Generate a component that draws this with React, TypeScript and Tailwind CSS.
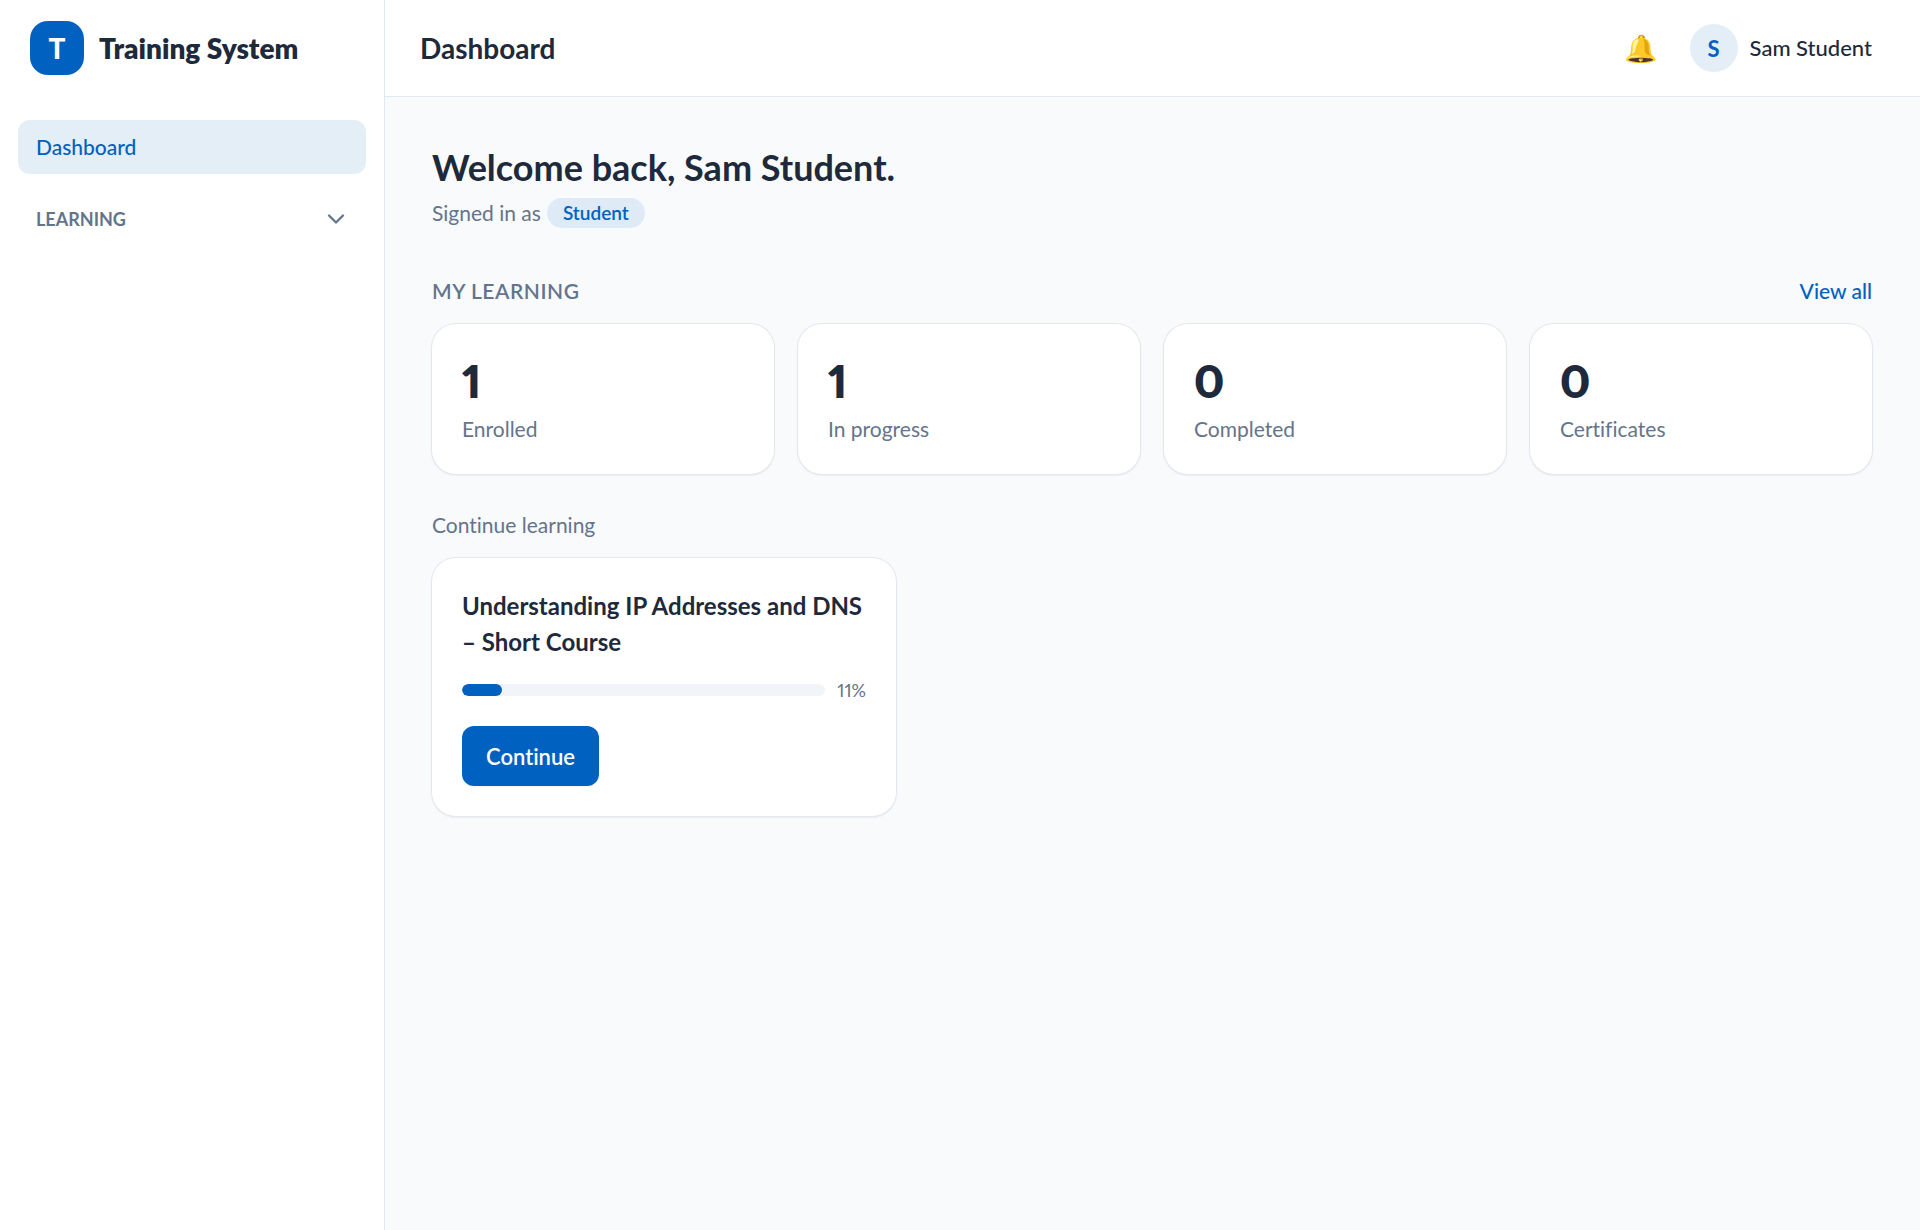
import { useState } from "react";
import { ChevronDown } from "lucide-react";

const stats = [
  { label: "Enrolled", value: 1 },
  { label: "In progress", value: 1 },
  { label: "Completed", value: 0 },
  { label: "Certificates", value: 0 },
];

const courses = [
  { title: "Understanding IP Addresses and DNS – Short Course", progress: 11 },
];

function Sidebar() {
  const [open, setOpen] = useState(false);

  return (
    <aside className="w-[385px] shrink-0 border-r border-[#e2e8f0] bg-white">
      <div className="flex h-24 items-center gap-[15px] px-[30px]">
        <div className="flex size-[54px] items-center justify-center rounded-[18px] bg-[#0061c1] text-[28px] font-black text-white">
          T
        </div>
        <span className="text-[28px] leading-9 font-extrabold">Training System</span>
      </div>

      <nav className="px-[18px] pt-6">
        <a
          href="#"
          className="flex h-[54px] items-center rounded-xl bg-[#e4eef7] px-[18px] text-[21px] font-medium text-[#0061c1]"
        >
          Dashboard
        </a>
        <button
          type="button"
          aria-expanded={open}
          onClick={() => setOpen(!open)}
          className="mt-6 flex h-[42px] w-full items-center justify-between pr-4 pl-[18px] text-[18px] font-bold text-[#64748b] uppercase"
        >
          Learning
          <ChevronDown size={28} strokeWidth={2} />
        </button>
      </nav>
    </aside>
  );
}

function Header() {
  return (
    <header className="flex h-[97px] items-center justify-between border-b border-[#e2e8f0] bg-white pr-12 pl-[35px]">
      <h1 className="text-[28px] leading-9 font-bold">Dashboard</h1>
      <div className="flex items-center gap-8">
        <button type="button" aria-label="Notifications" className="text-[27px] leading-9">
          🔔
        </button>
        <div className="flex items-center gap-3">
          <span className="flex size-12 items-center justify-center rounded-full bg-[#e4eef7] text-[22px] font-bold text-[#0061c1]">
            S
          </span>
          <span className="text-[22px] leading-[30px] font-medium">Sam Student</span>
        </div>
      </div>
    </header>
  );
}

export default function App() {
  return (
    <div className="flex min-h-screen bg-[#f8fafc] font-['Lato',sans-serif] text-[#1e293b] [font-variant-ligatures:none]">
      <Sidebar />

      <div className="min-w-0 flex-1">
        <Header />

        <main className="py-12 pr-12 pl-[47px]">
          <h2 className="text-[36px] leading-[45px] font-bold">Welcome back, Sam Student.</h2>
          <p className="mt-2 flex items-center gap-1.5 text-[21px] leading-[30px] text-[#64748b]">
            Signed in as
            <span className="rounded-full bg-[#deeaf6] px-4 text-[19px] font-semibold text-[#0061c1]">
              Student
            </span>
          </p>

          <section className="mt-12">
            <div className="flex items-center justify-between text-[21px] leading-[30px]">
              <h3 className="font-semibold tracking-wide text-[#64748b] uppercase">My learning</h3>
              <a href="#" className="font-medium text-[#0061c1]">
                View all
              </a>
            </div>

            <div className="mt-[18px] grid grid-cols-4 gap-6">
              {stats.map((s) => (
                <div key={s.label} className="rounded-3xl bg-white p-[30px] shadow-sm ring-1 ring-[#e2e8f0]">
                  <div className="text-[45px] leading-[54px] font-extrabold proportional-nums">{s.value}</div>
                  <div className="mt-1.5 text-[21px] leading-[30px] text-[#64748b]">{s.label}</div>
                </div>
              ))}
            </div>

            <h4 className="mt-9 text-[21px] leading-[30px] text-[#64748b]">Continue learning</h4>
            <div className="mt-[18px] grid grid-cols-3 gap-6">
              {courses.map((c) => (
                <article key={c.title} className="rounded-3xl bg-white p-[30px] shadow-sm ring-1 ring-[#e2e8f0]">
                  <h5 className="text-[24px] leading-9 font-bold">{c.title}</h5>
                  <div className="mt-[18px] flex items-center gap-3">
                    <div className="h-3 flex-1 overflow-hidden rounded-full bg-[#f1f5f9]">
                      <div className="h-full rounded-full bg-[#0061c1]" style={{ width: `${c.progress}%` }} />
                    </div>
                    <span className="text-[18px] leading-6 text-[#64748b] proportional-nums">{c.progress}%</span>
                  </div>
                  <button
                    type="button"
                    className="mt-6 h-[60px] rounded-xl bg-[#0061c1] px-6 text-[22px] font-semibold text-white shadow-xs"
                  >
                    Continue
                  </button>
                </article>
              ))}
            </div>
          </section>
        </main>
      </div>
    </div>
  );
}
